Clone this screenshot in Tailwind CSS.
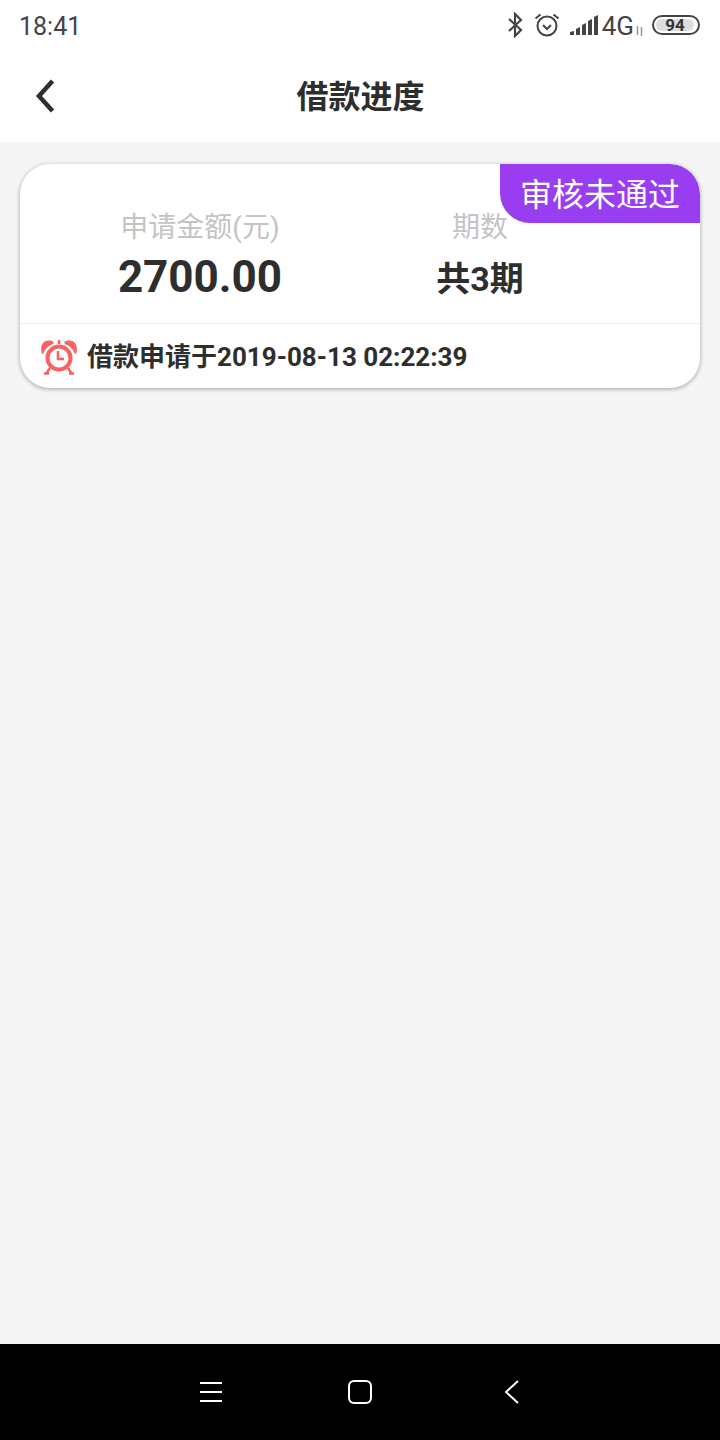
<!DOCTYPE html>
<html lang="zh-CN">
<head>
    <meta charset="UTF-8">
    <meta name="viewport" content="width=device-width, initial-scale=1.0">
    <title>借款进度</title>
    <script src="https://cdn.jsdelivr.net/npm/@tailwindcss/browser@4"></script>
</head>
<body class="bg-[#f5f5f5] w-[720px] h-[1440px] flex flex-col font-[Roboto,'Noto_Sans_CJK_SC',sans-serif]">
    <!-- Status bar -->
    <div class="bg-white h-[50px] flex items-center justify-between pl-[19px] pr-[20px] text-[#444444]">
        <span class="text-[25px] leading-none mt-[3px]">18:41</span>
        <div class="flex items-center">
            <svg class="w-[18px] h-[26px]" viewBox="0 0 18 26" fill="none" stroke="#444444" stroke-width="2.2"><path d="M3 7l12 11-6 6V2l6 6L3 19"/></svg>
            <svg class="w-[26px] h-[26px] ml-[10px]" viewBox="0 0 26 26" fill="none" stroke="#444444" stroke-width="2"><circle cx="13" cy="14" r="9.5"/><path d="M9 13l4 4 4-4M1.500 6.500l5-4M24.500 6.500l-5-4"/></svg>
            <svg class="w-[28px] h-[22px] ml-[10px]" viewBox="0 0 28 22" fill="#444444"><path d="M0 21v-3l4-1v4zM6 21v-6l4-2v8zM12 21v-10l4-2v12zM18 21v-14l4-2v16zM24 21v-18l4-2v20z"/></svg>
            <span class="text-[26px] leading-none ml-[4px] mt-[2px]">4G</span>
            <svg class="w-[9px] h-[10px] mt-[12px] mr-[8px] ml-[1px]" viewBox="0 0 9 10" fill="none" stroke="#999999" stroke-width="1.500"><path d="M2.500 0v9M6.500 1v9"/></svg>
            <div class="w-[48px] h-[20px] rounded-full border-2 border-[#444444] p-[2px] flex">
                <div class="w-[38px] h-full rounded-full bg-[#dddddd] flex items-center justify-center text-[17px] font-bold leading-none text-[#333333]">94</div>
            </div>
        </div>
    </div>

    <!-- Title bar -->
    <header class="bg-white h-[92px] relative flex items-center justify-center">
        <svg class="absolute left-[34px] top-[29px] w-[22px] h-[34px]" viewBox="0 0 22 34" fill="none" stroke="#2e2e2e" stroke-width="4.500"><path d="M18.500 2L5 17l13.500 15"/></svg>
        <h1 class="text-[32px] font-bold text-[#2e2e2e] leading-none ml-[1px] mt-[1px]">借款进度</h1>
    </header>

    <!-- Main -->
    <main class="flex-1 px-[20px] pt-[22px]">
        <div class="relative bg-white h-[224px] rounded-[30px] shadow-[0_1px_4px_rgba(0,0,0,0.35)] flex flex-col overflow-hidden">
            <div class="absolute top-0 right-0 w-[200px] h-[59px] pt-[2px] bg-[#983df0] rounded-tr-[30px] rounded-bl-[30px] flex items-center justify-center text-white text-[32px] leading-none">审核未通过</div>
            <div class="h-[160px] grid grid-cols-2 pl-[40px] pr-[80px] border-b border-[#eeeeee] text-center">
                <div class="pt-[45px]">
                    <p class="text-[28px] leading-[38px] text-[#c4c4c4]">申请金额(元)</p>
                    <p class="text-[44px] leading-[50px] font-bold text-[#2e2e2e] mt-[5px]">2700.00</p>
                </div>
                <div class="pt-[45px]">
                    <p class="text-[28px] leading-[38px] text-[#c4c4c4]">期数</p>
                    <p class="text-[34px] leading-[40px] font-bold text-[#2e2e2e] mt-[12px]">共3期</p>
                </div>
            </div>
            <div class="flex-1 flex items-center pl-[21px]">
                <svg class="w-[36px] h-[36px] mt-[1px]" viewBox="0 0 36 36" fill="none" stroke="#fb6063">
                    <path fill="#fb6063" stroke="none" d="M1 15C-2 6 3 0 11 2 13 3 13 4 12 5 7 7 4 10 2 15ZM35 15C38 6 33 0 25 2 23 3 23 4 24 5 29 7 32 10 34 15Z"/>
                    <path stroke-width="2.500" d="M18 1v4"/>
                    <circle cx="18" cy="19" r="11.500" stroke-width="4"/>
                    <path stroke-width="2.500" d="M17 12v8h6M9 29l-4 6M27 29l4 6M3 34.500h5M28 34.500h5"/>
                </svg>
                <span class="ml-[10px] text-[26px] leading-none font-bold text-[#2e2e2e] mt-[2px]">借款申请于2019-08-13 02:22:39</span>
            </div>
        </div>
    </main>

    <!-- Navigation bar -->
    <nav class="bg-black h-[96px] flex items-center justify-center">
        <div class="relative w-[360px] h-full">
            <svg class="absolute left-[20px] top-[37px] w-[22px] h-[22px]" viewBox="0 0 22 22" stroke="#ffffff" stroke-width="2"><path d="M0 2h22M0 11h22M0 20h22"/></svg>
            <svg class="absolute left-[168px] top-[36px] w-[24px] h-[24px]" viewBox="0 0 24 24" fill="none" stroke="#ffffff" stroke-width="2"><rect x="1" y="1" width="22" height="22" rx="5"/></svg>
            <svg class="absolute left-[324px] top-[36px] w-[15px] h-[24px]" viewBox="0 0 15 24" fill="none" stroke="#ffffff" stroke-width="2"><path d="M14 1L2 12l12 11"/></svg>
        </div>
    </nav>
</body>
</html>
